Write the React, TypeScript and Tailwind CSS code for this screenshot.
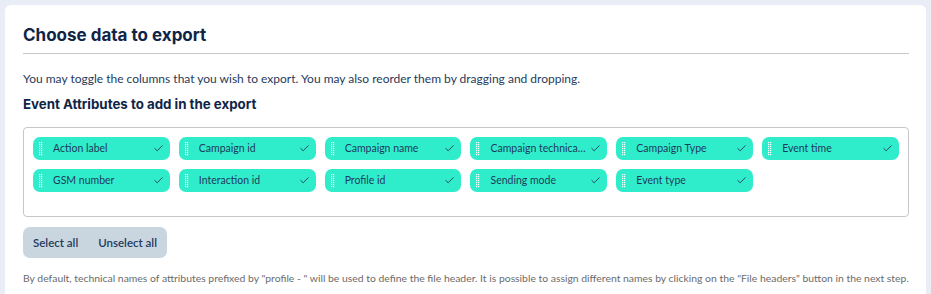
import { Check } from 'lucide-react';

const attributes = [
  'Action label',
  'Campaign id',
  'Campaign name',
  'Campaign technical name',
  'Campaign Type',
  'Event time',
  'GSM number',
  'Interaction id',
  'Profile id',
  'Sending mode',
  'Event type',
];

function DragHandle() {
  const dots = [];
  for (let r = 0; r < 7; r++) {
    for (let c = 0; c < 2; c++) {
      dots.push(<rect key={`${r}-${c}`} x={c * 2} y={r * 2} width="1.2" height="1.2" fill="#ffffff" />);
    }
  }
  return (
    <svg width="4" height="14" viewBox="0 0 4 14" className="shrink-0">
      {dots}
    </svg>
  );
}

function Chip({ label }: { label: string }) {
  return (
    <div className="flex h-[23px] min-w-0 items-center rounded-[7px] bg-[#2fedcb] pl-[6px] pr-[6px] text-[10.5px] text-[#1f3a5c]">
      <DragHandle />
      <span className="ml-[10px] min-w-0 flex-1 truncate">{label}</span>
      <Check size={11} strokeWidth={2} className="ml-1 shrink-0 text-[#1f3a5c]" />
    </div>
  );
}

export default function App() {
  return (
    <div className="min-h-[294px] bg-[#e9eef6] px-[5px] pt-[5px]" style={{ fontFamily: 'Lato, "Open Sans", sans-serif' }}>
      <div className="rounded-t-[6px] bg-white pl-[18px] pr-[17px] pb-[10px] pt-[18px]">
        <h1 className="text-[17px] font-bold leading-[24px] text-[#0f2547]" style={{ fontFamily: 'Inter, sans-serif' }}>
          Choose data to export
        </h1>
        <div className="mt-[6px] h-px bg-[#c7c7c7]" />
        <p className="mt-[18px] text-[12px] leading-[14px] text-[#1f3a5c]">
          You may toggle the columns that you wish to export. You may also reorder them by dragging and dropping.
        </p>
        <h2 className="mt-[8px] text-[13.3px] font-bold leading-[20px] text-[#0f2547]" style={{ fontFamily: 'Inter, sans-serif' }}>
          Event Attributes to add in the export
        </h2>
        <div className="mt-[13px] h-[90px] rounded-[4px] border border-[#c7c7c7] px-[9px] pt-[9px]">
          <div className="grid grid-cols-6 gap-x-[9px] gap-y-[9px]">
            {attributes.map((a) => (
              <Chip key={a} label={a} />
            ))}
          </div>
        </div>
        <div className="mt-[10px] inline-flex h-[31px] items-center gap-[20px] rounded-[7px] bg-[#c9d6e0] px-[10px] text-[11.5px] font-semibold text-[#1f3a5c]">
          <span>Select all</span>
          <span>Unselect all</span>
        </div>
        <p className="mt-[13px] text-[10.4px] leading-[14px] text-[#6b6b6b]">
          By default, technical names of attributes prefixed by "profile - " will be used to define the file header. It is possible to assign different names by clicking on the "File headers" button in the next step.
        </p>
      </div>
    </div>
  );
}
